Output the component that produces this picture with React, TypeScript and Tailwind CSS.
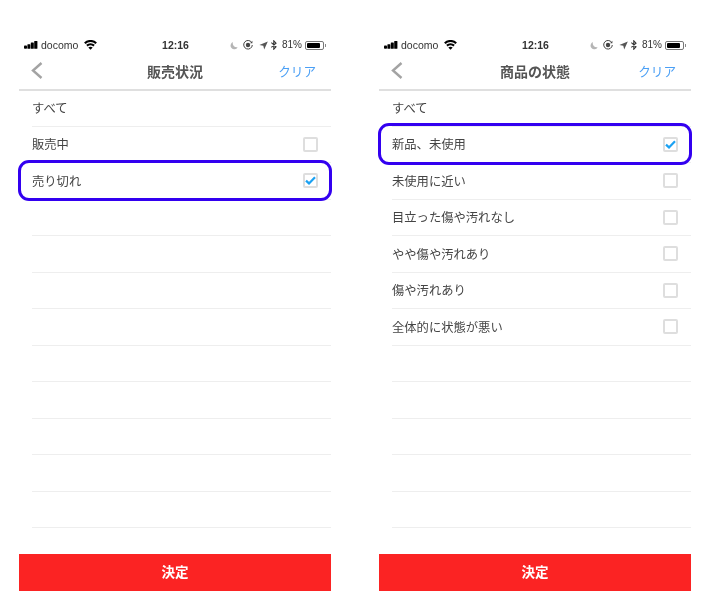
const FONT = "font-['Noto_Sans_CJK_JP','Noto_Sans',sans-serif]";

function Signal() {
  return (
    <svg width="15" height="8" viewBox="0 0 15 8" className="text-[#000]">
      <rect x="0" y="4.4" width="3" height="3.4" rx="0.8" fill="currentColor" />
      <rect x="3.4" y="3.2" width="3" height="4.6" rx="0.6" fill="currentColor" />
      <rect x="6.8" y="1.4" width="3" height="6.4" rx="0.6" fill="currentColor" />
      <rect x="10.2" y="0" width="3.2" height="7.8" rx="0.6" fill="currentColor" />
    </svg>
  );
}

function Wifi() {
  return (
    <svg width="13" height="10" viewBox="0 0 13 10" fill="none" stroke="#000" strokeWidth="2.1" className="-mt-[1px]">
      <path d="M0.8 3.2C4 0.2 9 0.2 12.2 3.2" />
      <path d="M2.9 5.6C4.9 3.9 8.1 3.9 10.1 5.6" />
      <path d="M6.5 9.8L4.3 7.5C5.6 6.4 7.4 6.4 8.7 7.5Z" fill="#000" stroke="none" />
    </svg>
  );
}

function StatusRight() {
  return (
    <div className="flex items-center">
      <svg width="8" height="9" viewBox="0 0 9 9" className="mr-[5px]">
        <path d="M3.4 0.6A4.2 4.2 0 1 0 8.6 6.4A4.4 4.4 0 0 1 3.4 0.6Z" fill="#b5b5b5" />
      </svg>
      <svg width="10" height="10" viewBox="0 0 10 10" className="mr-[6px]" fill="none">
        <path d="M8.6 2.4A4.3 4.3 0 1 0 9.3 5" stroke="#444" strokeWidth="1" />
        <circle cx="5" cy="5" r="2.2" fill="#444" />
        <path d="M9.4 0.8V3.2H7Z" fill="#444" />
      </svg>
      <svg width="9" height="9" viewBox="0 0 9 9" className="mr-[3px]">
        <path d="M8.8 0.4L0.4 3.9L4.3 4.7L5.2 8.6Z" fill="#555" />
      </svg>
      <svg width="6" height="10" viewBox="0 0 6 10" fill="none" stroke="#333" strokeWidth="1.1" className="mr-[5px]">
        <path d="M0.3 2.6L5 6.9L2.8 9.2V0.8L5 3.1L0.3 7.4" />
      </svg>
      <span className="text-[10px] leading-none text-[#333] font-['Liberation_Sans',sans-serif] mr-[3px]">81%</span>
      <div className="flex items-center">
        <div className="w-[19px] h-[9px] rounded-[2px] border border-[#777] p-[1px]">
          <div className="h-full w-[85%] bg-[#000] rounded-[1px]" />
        </div>
        <div className="w-[1px] h-[3px] bg-[#888] ml-[1px]" />
      </div>
    </div>
  );
}

function Check({ on }: { on: boolean }) {
  return (
    <div className="w-[15px] h-[15px] border-2 border-[#dedede] rounded-[2px] bg-white flex items-center justify-center">
      {on && (
        <svg width="11" height="9" viewBox="0 0 11 9" fill="none">
          <path d="M1 4.6L4 7.4L10 1.2" stroke="#1ba1f2" strokeWidth="2.2" />
        </svg>
      )}
    </div>
  );
}

type RowData = { label?: string; box?: boolean; on?: boolean; ring?: string };

function Row({ label, box, on, ring }: RowData) {
  return (
    <div className="relative pl-[13px] h-[36.5px]">
      <div className="h-full border-b border-[#eeeeee] flex items-center justify-between pr-[13px]">
        <span className="text-[12.3px] text-[#444] leading-none">{label}</span>
        {box && <Check on={!!on} />}
      </div>
      {ring && <div className={ring} />}
    </div>
  );
}

function Phone({ title, rows }: { title: string; rows: RowData[] }) {
  return (
    <div className="w-[312px] flex flex-col">
      <div className="h-[16px] pl-[5px] pr-[5px] grid grid-cols-[1fr_auto_1fr] items-center">
        <div className="flex items-center">
          <Signal />
          <span className="text-[10.5px] leading-none text-[#333] font-['Liberation_Sans',sans-serif] ml-[2px] mr-[6px]">docomo</span>
          <Wifi />
        </div>
        <span className="text-[10.5px] leading-none font-bold text-[#333] font-['Liberation_Sans',sans-serif] ml-[1px]">12:16</span>
        <div className="flex justify-end">
          <StatusRight />
        </div>
      </div>
      <div className="h-[38px] border-b-2 border-[#dfdfdf] grid grid-cols-[1fr_auto_1fr] items-center px-[15px]">
        <svg width="12" height="17" viewBox="0 0 12 17" fill="none" stroke="#a3a3a3" strokeWidth="2.4" className="-ml-[3px] -mt-[1px]">
          <path d="M10.5 1L2 8.5L10.5 16" />
        </svg>
        <span className="text-[14px] font-bold text-[#555] leading-none">{title}</span>
        <span className="text-[12.6px] text-[#4a9ff5] leading-none justify-self-end">クリア</span>
      </div>
      <div className="flex flex-col -mt-[1px]">
        {rows.map((r, i) => (
          <Row key={i} {...r} />
        ))}
      </div>
      <button className="mt-[26px] h-[37px] bg-[#fb2323] text-white text-[13.5px] font-bold pb-[2px]">決定</button>
    </div>
  );
}

const RING =
  "absolute -left-[1px] -right-[1px] -top-[3.5px] -bottom-[1.5px] border-[3.5px] border-[#3300f0] rounded-[11px]";

const left: RowData[] = [
  { label: "すべて" },
  { label: "販売中", box: true },
  { label: "売り切れ", box: true, on: true, ring: RING },
  ...Array.from({ length: 9 }, () => ({})),
];

const right: RowData[] = [
  { label: "すべて" },
  { label: "新品、未使用", box: true, on: true, ring: RING },
  { label: "未使用に近い", box: true },
  { label: "目立った傷や汚れなし", box: true },
  { label: "やや傷や汚れあり", box: true },
  { label: "傷や汚れあり", box: true },
  { label: "全体的に状態が悪い", box: true },
  ...Array.from({ length: 5 }, () => ({})),
];

export default function App() {
  return (
    <div className={`w-[705px] h-[607px] bg-white flex gap-[48px] pl-[19px] pt-[37px] overflow-hidden blur-[0.4px] ${FONT}`}>
      <Phone title="販売状況" rows={left} />
      <Phone title="商品の状態" rows={right} />
    </div>
  );
}
